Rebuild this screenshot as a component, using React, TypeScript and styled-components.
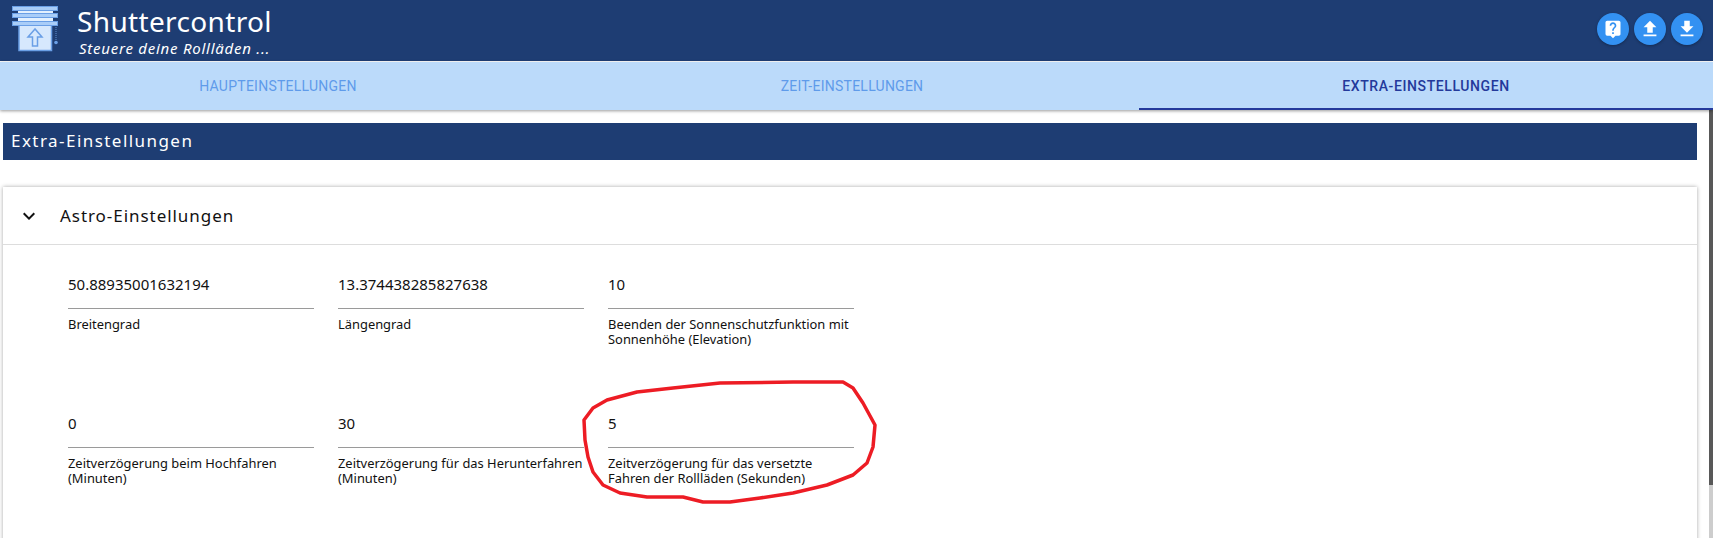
import React from "react";
import styled, { createGlobalStyle } from "styled-components";
import { MdLiveHelp, MdFileUpload, MdFileDownload, MdKeyboardArrowDown } from "react-icons/md";

const navy = "#1e3d73";
const bodyFont = `"Noto Sans", "Open Sans", sans-serif`;

const GlobalStyle = createGlobalStyle`
  html, body {
    margin: 0;
    padding: 0;
    height: 100%;
    overflow: hidden;
    background: #fff;
    font-family: ${bodyFont};
  }
`;

const tabs = [
  { label: "Haupteinstellungen", active: false },
  { label: "Zeit-Einstellungen", active: false },
  { label: "Extra-Einstellungen", active: true },
];

const fields = [
  { value: "50.88935001632194", label: "Breitengrad" },
  { value: "13.374438285827638", label: "Längengrad" },
  { value: "10", label: "Beenden der Sonnenschutzfunktion mit Sonnenhöhe (Elevation)" },
  { value: "0", label: "Zeitverzögerung beim Hochfahren (Minuten)" },
  { value: "30", label: "Zeitverzögerung für das Herunterfahren (Minuten)" },
  { value: "5", label: "Zeitverzögerung für das versetzte Fahren der Rollläden (Sekunden)" },
];

function ShutterLogo() {
  return (
    <svg width="60" height="54" viewBox="0 0 60 54">
      <rect x="19" y="25" width="32.500" height="25.500" fill="#d6e8fd" stroke="#6a9fe6" strokeWidth="1.5" />
      <rect x="18" y="10" width="35" height="4" fill="#e3f0fe" />
      <rect x="18" y="17" width="35" height="4" fill="#e3f0fe" />
      <rect x="12.500" y="6.500" width="45" height="4" fill="#a9cdf8" stroke="#6a9fe6" />
      <rect x="12.500" y="13.500" width="45" height="4" fill="#a9cdf8" stroke="#6a9fe6" />
      <rect x="12.500" y="21.500" width="45" height="4" fill="#a9cdf8" stroke="#6a9fe6" />
      <path d="M35 29l-7 8h4.500v9h5v-9H42z" fill="#d6e8fd" stroke="#6a9fe6" strokeWidth="1.5" />
      <line x1="56" y1="27" x2="56" y2="40" stroke="#5f8fd0" strokeWidth="1" strokeDasharray="1 1" />
      <circle cx="56" cy="42.500" r="1.800" fill="#6a9fe6" />
    </svg>
  );
}

function RedCircle() {
  return (
    <Scribble viewBox="0 0 1713 538" width="1713" height="538">
      <path
        d="M843 382L853 388L863 403L875 425L873 447L867 463L853 475L827 485L793 493L760 498L730 502L703 502L683 497L647 497L620 493L603 485L593 472L588 457L585 440L584 420L593 408L607 400L637 392L673 388L720 383L793 382Z"
        fill="none"
        stroke="#ed1c24"
        strokeWidth="3.500"
        strokeLinejoin="round"
      />
    </Scribble>
  );
}

export default function App() {
  return (
    <Page>
      <GlobalStyle />
      <Header>
        <Brand>
          <ShutterLogo />
          <BrandText>
            <Title>Shuttercontrol</Title>
            <Subtitle>Steuere deine Rollläden ...</Subtitle>
          </BrandText>
        </Brand>
        <Actions>
          <RoundButton><MdLiveHelp size={20} /></RoundButton>
          <RoundButton><MdFileUpload size={22} /></RoundButton>
          <RoundButton><MdFileDownload size={22} /></RoundButton>
        </Actions>
      </Header>
      <TabBar>
        {tabs.map((tab) => (
          <Tab key={tab.label} $active={tab.active}>{tab.label}</Tab>
        ))}
      </TabBar>
      <Body>
        <Content>
          <SectionBar>Extra-Einstellungen</SectionBar>
          <Card>
            <CardHead>
              <MdKeyboardArrowDown size={24} />
              <CardTitle>Astro-Einstellungen</CardTitle>
            </CardHead>
            <FieldGrid>
              {fields.map((field) => (
                <Field key={field.label}>
                  <FieldValue>{field.value}</FieldValue>
                  <FieldLabel>{field.label}</FieldLabel>
                </Field>
              ))}
            </FieldGrid>
          </Card>
        </Content>
        <ScrollTrack>
          <ScrollThumb />
        </ScrollTrack>
      </Body>
      <RedCircle />
    </Page>
  );
}

const Page = styled.div`
  position: relative;
  width: 1713px;
  height: 538px;
  overflow: hidden;
`;

const Scribble = styled.svg`
  position: absolute;
  top: 0;
  left: 0;
  pointer-events: none;
`;

const Header = styled.header`
  height: 62px;
  box-sizing: border-box;
  border-bottom: 1px solid #fff;
  background: ${navy};
  display: flex;
  align-items: flex-start;
  justify-content: space-between;
  padding: 0 10px 0 0;
`;

const Brand = styled.div`
  display: flex;
  align-items: flex-start;
  gap: 17px;
`;

const BrandText = styled.div`
  display: flex;
  flex-direction: column;
  color: #fff;
`;

const Title = styled.div`
  font-size: 28px;
  line-height: 36px;
  margin-top: 3px;
  letter-spacing: 0.35px;
`;

const Subtitle = styled.div`
  font-size: 15px;
  line-height: 18px;
  font-style: italic;
  letter-spacing: 0.75px;
  margin-left: 2px;
`;

const Actions = styled.div`
  display: flex;
  gap: 5px;
  margin-top: 13px;
`;

const RoundButton = styled.div`
  width: 32px;
  height: 32px;
  border-radius: 50%;
  background: #3391f2;
  color: #fff;
  display: flex;
  align-items: center;
  justify-content: center;
  box-shadow: 0 1px 3px rgba(0, 0, 0, 0.3);
`;

const TabBar = styled.nav`
  height: 48px;
  background: #bbdafa;
  display: grid;
  grid-template-columns: repeat(3, 574px);
  justify-content: end;
  position: relative;
  box-shadow: 0 1px 3px rgba(0, 0, 0, 0.4);
`;

const Tab = styled.div<{ $active: boolean }>`
  box-sizing: border-box;
  display: flex;
  align-items: center;
  justify-content: center;
  font-family: Roboto, sans-serif;
  font-size: 14px;
  letter-spacing: ${(p) => (p.$active ? "0.6px" : "0.25px")};
  text-transform: uppercase;
  font-weight: ${(p) => (p.$active ? 500 : 400)};
  color: ${(p) => (p.$active ? "#24399b" : "#5f9bea")};
  border-bottom: 2px solid ${(p) => (p.$active ? "#24399b" : "transparent")};
  padding-top: 2px;
`;

const Body = styled.main`
  display: flex;
  height: 428px;
`;

const Content = styled.div`
  flex: 1;
  padding: 13px 12px 0 3px;
  min-width: 0;
`;

const ScrollTrack = styled.div`
  width: 4px;
  background: #cdcdcd;
`;

const ScrollThumb = styled.div`
  height: 375px;
  background: #585858;
`;

const SectionBar = styled.div`
  height: 37px;
  background: ${navy};
  color: #fff;
  font-size: 17px;
  line-height: 35px;
  padding-left: 8px;
  letter-spacing: 1.45px;
`;

const Card = styled.section`
  margin-top: 27px;
  background: #fff;
  box-shadow: 0 0 4px rgba(0, 0, 0, 0.35);
  height: 400px;
`;

const CardHead = styled.div`
  height: 58px;
  box-sizing: border-box;
  border-bottom: 1px solid #ddd;
  display: flex;
  align-items: center;
  padding-left: 14px;
  gap: 19px;
  color: #111;
`;

const CardTitle = styled.div`
  font-size: 17px;
  letter-spacing: 0.95px;
`;

const FieldGrid = styled.div`
  display: grid;
  grid-template-columns: repeat(3, 246px);
  column-gap: 24px;
  row-gap: 0;
  padding: 21px 0 0 65px;
`;

const Field = styled.div`
  height: 139px;
`;

const FieldValue = styled.div`
  height: 43px;
  box-sizing: border-box;
  border-bottom: 1px solid #9a9a9a;
  font-size: 15px;
  line-height: 36px;
  color: #111;
`;

const FieldLabel = styled.div`
  margin-top: 8px;
  font-size: 12.9px;
  line-height: 15px;
  color: #111;
`;
